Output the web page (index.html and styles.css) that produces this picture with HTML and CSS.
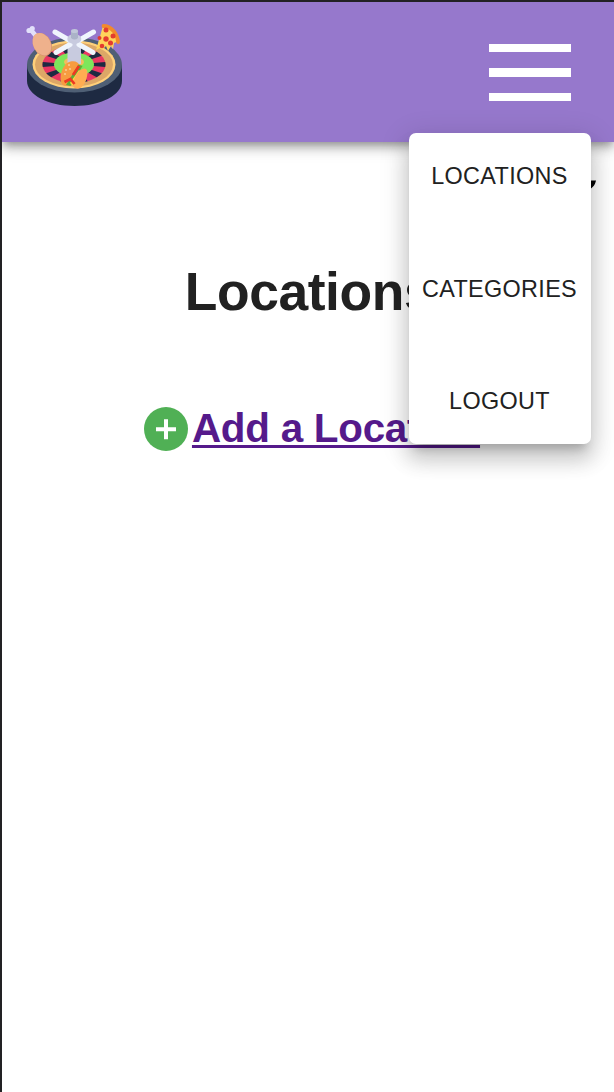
FILE: index.html
```html
<!DOCTYPE html>
<html lang="en">
<head>
<meta charset="utf-8">
<title>Locations</title>
<link rel="stylesheet" href="styles.css">
</head>
<body>
<header class="bar">
  <svg class="logo" viewBox="24 22 100 86" role="img" aria-label="Food roulette">
    <path fill="#1e2a42" d="M27 65v16c0 14 21 25 47.500 25S122 95 122 81V65z"/>
    <ellipse cx="74.500" cy="65" rx="47.500" ry="27.500" fill="#4f5f75"/>
    <ellipse cx="74" cy="64.500" rx="41.500" ry="24" fill="#ffd07a"/>
    <ellipse cx="74" cy="64.500" rx="39" ry="22" fill="#dca767"/>
    <ellipse cx="74" cy="64.500" rx="31.500" ry="18.500" fill="#e93763"/>
    <g transform="translate(74 64.500) scale(1 .587)">
      <circle r="25.500" fill="none" stroke="#1e2a42" stroke-width="12" pathLength="160" stroke-dasharray="7 9" stroke-dashoffset="3.500"/>
    </g>
    <ellipse cx="74" cy="64.500" rx="20" ry="12" fill="#7ee65b"/>
    <ellipse cx="74" cy="62" rx="10" ry="5" fill="#f2bd5c"/>
    <path fill="#c8cbdf" d="M67.500 39h13.500v25h-13.500z"/>
    <path stroke="#f0f5fd" stroke-width="5" stroke-linecap="round" d="M55 32l13 7.500M93.500 32l-13 7.500M56 52.500l14-8M93 52.500l-14-8"/>
    <ellipse cx="74.300" cy="39" rx="7" ry="5" fill="#c8cbdf"/>
    <path fill="#abb3c8" d="M71 31h7v7q-3.500 3-7 0z"/>
    <ellipse cx="74.500" cy="31" rx="3.500" ry="2" fill="#c0c7d9"/>
    <path stroke="#e2e0fa" stroke-width="4.500" stroke-linecap="round" d="M31 30l5 6"/>
    <circle cx="29" cy="30.500" r="2.600" fill="#e2e0fa"/>
    <circle cx="32.200" cy="28.600" r="2.600" fill="#e2e0fa"/>
    <ellipse cx="42.300" cy="44.700" rx="9" ry="12.200" transform="rotate(-27 42 44.500)" fill="#d9916f"/>
    <ellipse cx="41.800" cy="44.300" rx="8.600" ry="11.800" transform="rotate(-27 41.500 44)" fill="#efb18c"/>
    <path fill="#ffd45b" d="M103 26L96 50l4-2 2 2 4-4 2 5 3-5 2 3 1-6 5-2c-1-7-8-14-16-15z"/>
    <path fill="none" stroke="#f28a2b" stroke-width="3.800" stroke-linecap="round" d="M103.500 26c8 0 14 8 14.500 16"/>
    <g fill="#e43c2f"><circle cx="106" cy="30" r="2.500"/><circle cx="113" cy="36" r="2.500"/><circle cx="106" cy="39" r="2.700"/><circle cx="99.500" cy="38" r="2"/><circle cx="110.500" cy="43" r="2.500"/><circle cx="102" cy="46" r="2.300"/></g>
    <path fill="#f79c40" d="M61.500 83c-3-8 2-20 9-21.500 5-1 8 1 9 4l-10 20c-4 1-7 0-8-2.500z"/>
    <path fill="#5cad37" d="M66 85l12.500-20.500 4 1.500-12 20z"/>
    <path fill="#ffda3e" d="M70 83l9-13 3 3-9 13z"/>
    <path fill="#ffad52" d="M73.500 87c-1-7 3-17 10.500-18.500 4 0 4 5 2.500 10-2 8-8 13-13 8.500z"/>
    <path fill="none" stroke="#ed3923" stroke-width="2.800" d="M64.500 82l6-3 4 5M73 75l6-9"/>
    <g fill="#fff0ce"><circle cx="65" cy="74" r=".8"/><circle cx="66" cy="70" r=".8"/><circle cx="70" cy="69" r=".8"/><circle cx="69" cy="65" r=".8"/></g>
  </svg>
  <div class="nav">
    <div class="burger"><span></span><span></span><span></span></div>
    <nav class="menu">
      <a>LOCATIONS</a>
      <a>CATEGORIES</a>
      <a>LOGOUT</a>
    </nav>
  </div>
</header>
<main class="content">
  <svg class="flourish" viewBox="0 0 12 12" aria-hidden="true"><path d="M1 .5h10c-1 5-4 8-10 11z"/></svg>
  <h1 class="title">Locations</h1>
  <a class="add">
    <svg class="plus" viewBox="0 0 44 44" aria-hidden="true"><circle cx="22" cy="22" r="22" fill="#50b055"/><path fill="none" stroke="#fff" stroke-width="4" d="M12 22.200h20M22 12.200v20"/></svg>
    <span class="add-text">Add a Location</span>
  </a>
</main>
</body>
</html>
```
FILE: styles.css
```css
* { box-sizing: border-box; }
body {
  margin: 0;
  height: 1092px;
  overflow: hidden;
  border-top: 2px solid #222124;
  border-left: 2px solid #222124;
  background: #fff;
  color: #212121;
  font-family: "Liberation Sans", Arial, sans-serif;
}
.bar {
  position: relative;
  z-index: 1;
  display: flex;
  justify-content: space-between;
  height: 140px;
  padding: 20px 43px 0 22px;
  background: #9678cc;
  box-shadow: 0 4px 8px -2px rgba(0,0,0,.3), 0 8px 10px rgba(0,0,0,.14), 0 2px 20px rgba(0,0,0,.12);
}
.logo { width: 100px; height: 86px; }
.nav { position: relative; padding-top: 21.5px; }
.burger { display: flex; flex-direction: column; gap: 16.3px; width: 82px; }
.burger span { height: 8.4px; background: #fff; }
.menu {
  position: absolute;
  top: 111px;
  right: -20px;
  display: flex;
  flex-direction: column;
  align-items: center;
  justify-content: space-between;
  width: 182px;
  height: 311px;
  padding: 29px 1px 29px 0;
  border-radius: 7px;
  background: #fff;
  box-shadow: 0 10px 10px -6px rgba(0,0,0,.2), 0 16px 20px 2px rgba(0,0,0,.14), 0 6px 28px 4px rgba(0,0,0,.12);
}
.menu a {
  font-size: 23.4px;
  line-height: 28px;
  letter-spacing: .35px;
  white-space: nowrap;
}
.content { display: flex; flex-direction: column; align-items: center; }
.flourish { align-self: flex-end; width: 12px; height: 12px; margin: 38px 17px 0 0; }
.title {
  margin: 69px 0 0 2px;
  font-size: 53.4px;
  line-height: 62px;
  font-weight: 700;
  letter-spacing: -.4px;
}
.add {
  display: flex;
  align-items: center;
  gap: 4px;
  margin: 84px 0 0 8px;
  color: #551a8b;
}
.plus { width: 44px; height: 44px; }
.add-text {
  margin-top: -2px;
  font-size: 40.4px;
  line-height: 44px;
  font-weight: 700;
  letter-spacing: -.26px;
  text-decoration: underline;
  text-decoration-thickness: 3px;
  text-underline-offset: 3px;
  text-decoration-skip-ink: none;
}
```
